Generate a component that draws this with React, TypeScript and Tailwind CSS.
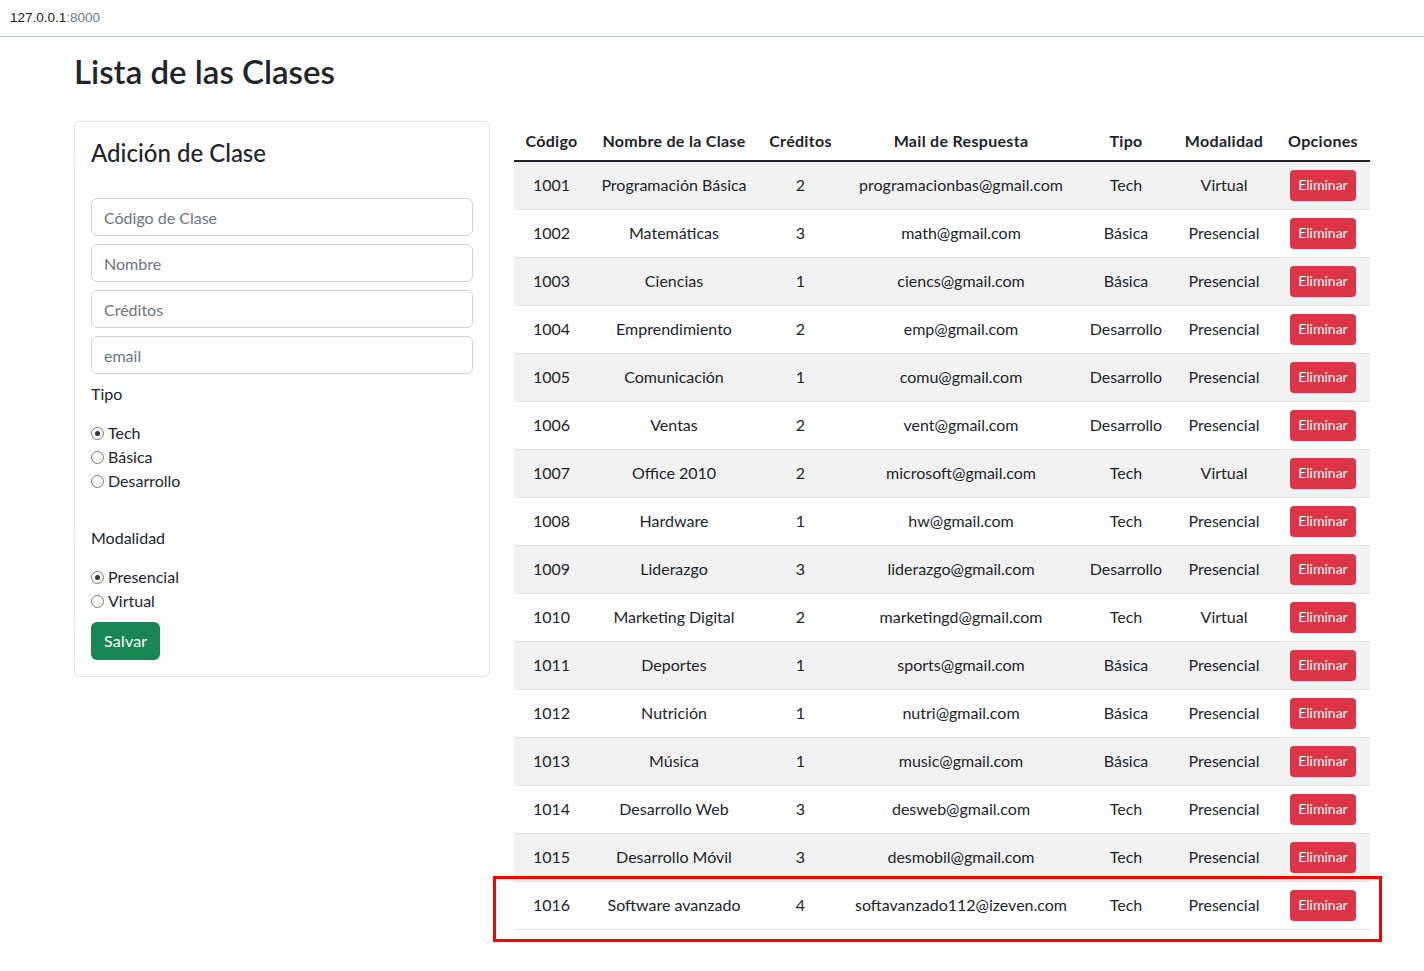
import React from 'react';

const rows = [
  ['1001', 'Programación Básica', '2', 'programacionbas@gmail.com', 'Tech', 'Virtual'],
  ['1002', 'Matemáticas', '3', 'math@gmail.com', 'Básica', 'Presencial'],
  ['1003', 'Ciencias', '1', 'ciencs@gmail.com', 'Básica', 'Presencial'],
  ['1004', 'Emprendimiento', '2', 'emp@gmail.com', 'Desarrollo', 'Presencial'],
  ['1005', 'Comunicación', '1', 'comu@gmail.com', 'Desarrollo', 'Presencial'],
  ['1006', 'Ventas', '2', 'vent@gmail.com', 'Desarrollo', 'Presencial'],
  ['1007', 'Office 2010', '2', 'microsoft@gmail.com', 'Tech', 'Virtual'],
  ['1008', 'Hardware', '1', 'hw@gmail.com', 'Tech', 'Presencial'],
  ['1009', 'Liderazgo', '3', 'liderazgo@gmail.com', 'Desarrollo', 'Presencial'],
  ['1010', 'Marketing Digital', '2', 'marketingd@gmail.com', 'Tech', 'Virtual'],
  ['1011', 'Deportes', '1', 'sports@gmail.com', 'Básica', 'Presencial'],
  ['1012', 'Nutrición', '1', 'nutri@gmail.com', 'Básica', 'Presencial'],
  ['1013', 'Música', '1', 'music@gmail.com', 'Básica', 'Presencial'],
  ['1014', 'Desarrollo Web', '3', 'desweb@gmail.com', 'Tech', 'Presencial'],
  ['1015', 'Desarrollo Móvil', '3', 'desmobil@gmail.com', 'Tech', 'Presencial'],
  ['1016', 'Software avanzado', '4', 'softavanzado112@izeven.com', 'Tech', 'Presencial'],
];

const headers = ['Código', 'Nombre de la Clase', 'Créditos', 'Mail de Respuesta', 'Tipo', 'Modalidad', 'Opciones'];
const widths = ['w-[75px]', 'w-[170px]', 'w-[83px]', 'w-[238px]', 'w-[92px]', 'w-[104px]', 'w-[94px]'];

function Radio({ label, checked }: { label: string; checked?: boolean }) {
  return (
    <label className="flex items-center h-6 gap-[4px]">
      <span className="w-[13px] h-[13px] rounded-full border border-[#767676] bg-white flex items-center justify-center">
        {checked && <span className="w-[5px] h-[5px] rounded-full bg-[#333]" />}
      </span>
      <span>{label}</span>
    </label>
  );
}

function Field({ placeholder }: { placeholder: string }) {
  return (
    <input
      placeholder={placeholder}
      className="block w-full h-[38px] px-3 border border-[#ced4da] rounded-[6px] text-base placeholder:text-[#6c757d] outline-none"
    />
  );
}

export default function App() {
  return (
    <div className="min-h-screen bg-white text-[#212529] font-['Lato','Segoe_UI',sans-serif]">
      {/* Address bar */}
      <div className="h-[37px] border-b border-[#b4c0ca] flex items-center pl-[10px] font-['Liberation_Sans',Arial,sans-serif] text-[13.5px]">
        <span className="text-[#202124]">127.0.0.1</span>
        <span className="text-[#6b7b88]">:8000</span>
      </div>

      <div className="pl-[74px]">
        <h1 className="text-[33px] font-semibold leading-[40px] mt-[14px]">Lista de las Clases</h1>

        <div className="flex gap-6 mt-[30px] items-start">
          {/* Form card */}
          <div className="w-[416px] border border-[#dee2e6] rounded-[6px] p-4">
            <h4 className="text-[24px] font-medium leading-[29px]">Adición de Clase</h4>
            <div className="mt-[31px] flex flex-col gap-2">
              <Field placeholder="Código de Clase" />
              <Field placeholder="Nombre" />
              <Field placeholder="Créditos" />
              <Field placeholder="email" />
            </div>
            <div className="mt-2 leading-6">Tipo</div>
            <div className="mt-[15px]">
              <Radio label="Tech" checked />
              <Radio label="Básica" />
              <Radio label="Desarrollo" />
            </div>
            <div className="mt-[33px] leading-6">Modalidad</div>
            <div className="mt-[15px]">
              <Radio label="Presencial" checked />
              <Radio label="Virtual" />
            </div>
            <button className="mt-[9px] h-[38px] px-[13px] bg-[#198754] text-white rounded-[6px] text-base tracking-[0.2px]">
              Salvar
            </button>
          </div>

          {/* Table */}
          <div className="relative w-[856px]">
            <table className="w-full table-fixed border-collapse text-base">
              <thead>
                <tr className="h-[40px] border-b-2 border-[#212529]">
                  {headers.map((h, i) => (
                    <th key={h} className={`${widths[i]} font-bold text-center px-1 tracking-[0.3px]`}>
                      {h}
                    </th>
                  ))}
                </tr>
              </thead>
              <tbody>
                {rows.map((r, i) => (
                  <tr key={r[0]} className={`h-[48px] border-b border-[#dee2e6] ${i % 2 === 0 ? 'bg-[#f2f2f2]' : 'bg-white'}`}>
                    {r.map((c, j) => (
                      <td key={j} className="text-center px-1 whitespace-nowrap">
                        {c}
                      </td>
                    ))}
                    <td className="text-center px-1">
                      <button className="h-[31px] px-2 bg-[#dc3545] text-white text-sm rounded-[4px]">Eliminar</button>
                    </td>
                  </tr>
                ))}
              </tbody>
            </table>
            {/* highlight annotation */}
            <div className="absolute left-[-21px] right-[-12px] bottom-[-12px] h-[66px] border-[3px] border-[#ff0000] pointer-events-none" />
          </div>
        </div>
      </div>
    </div>
  );
}
